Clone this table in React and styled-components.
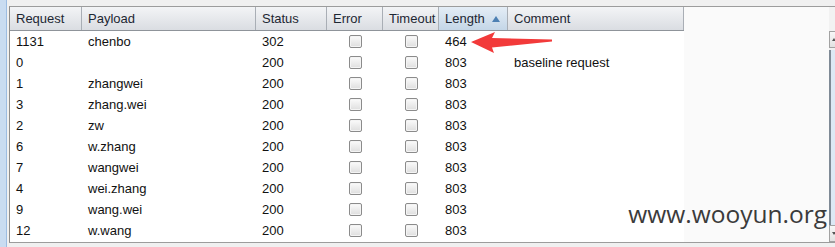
import styled, { createGlobalStyle } from 'styled-components';

const GlobalStyle = createGlobalStyle`
  html, body {
    margin: 0;
    padding: 0;
    background: #f0f0f0;
  }
  body {
    font-family: "Liberation Sans", Arial, sans-serif;
  }
`;

const COLUMNS = '72px 174px 71px 56px 56px 69px 176px';

const rows = [
  { id: '1131', payload: 'chenbo', status: '302', length: '464', comment: '' },
  { id: '0', payload: '', status: '200', length: '803', comment: 'baseline request' },
  { id: '1', payload: 'zhangwei', status: '200', length: '803', comment: '' },
  { id: '3', payload: 'zhang.wei', status: '200', length: '803', comment: '' },
  { id: '2', payload: 'zw', status: '200', length: '803', comment: '' },
  { id: '6', payload: 'w.zhang', status: '200', length: '803', comment: '' },
  { id: '7', payload: 'wangwei', status: '200', length: '803', comment: '' },
  { id: '4', payload: 'wei.zhang', status: '200', length: '803', comment: '' },
  { id: '9', payload: 'wang.wei', status: '200', length: '803', comment: '' },
  { id: '12', payload: 'w.wang', status: '200', length: '803', comment: '' },
];

const Page = styled.div`
  position: relative;
  display: flex;
  width: 835px;
  height: 247px;
  overflow: hidden;
  background: #f0f0f0;
`;

const SideStrip = styled.div`
  width: 6px;
  flex: none;
  background: #c9dcf1;
  border-right: 1px solid #9dbde2;
  margin-right: 2px;
`;

const Frame = styled.div`
  margin-top: 6px;
  height: 235px;
  display: flex;
  border-top: 1px solid #9c9c9c;
  border-bottom: 1px solid #9c9c9c;
  border-left: 1px solid #8d8d8d;
  flex: 1;
  min-width: 0;
`;

const Viewport = styled.div`
  width: 819px;
  flex: none;
  display: flex;
  background: #fafafa;
`;

const Table = styled.div`
  width: 674px;
  background: #fff;
  display: flex;
  flex-direction: column;
`;

const HeaderRow = styled.div`
  display: grid;
  grid-template-columns: ${COLUMNS};
  height: 23px;
  border-bottom: 1px solid #8f949a;
`;

const HeaderCell = styled.div`
  display: flex;
  align-items: center;
  justify-content: space-between;
  padding: 0 6px;
  font-size: 13px;
  color: #1d2733;
  border-right: 1px solid #a9aeb5;
  background: ${({ $sorted }) =>
    $sorted
      ? 'linear-gradient(#e4edf6, #c4d6e7)'
      : 'linear-gradient(#f3f4f6, #dadde2)'};
`;

const SortMark = styled.span`
  width: 0;
  height: 0;
  border-left: 4px solid transparent;
  border-right: 4px solid transparent;
  border-bottom: 6px solid #4d80b3;
  margin-right: 1px;
`;

const Row = styled.div`
  display: grid;
  grid-template-columns: ${COLUMNS};
  height: 21px;
`;

const Cell = styled.div`
  display: flex;
  align-items: center;
  justify-content: ${({ $center }) => ($center ? 'center' : 'flex-start')};
  padding: 0 6px;
  font-size: 13px;
  color: #111;
  white-space: nowrap;
`;

const CheckBox = styled.span`
  width: 11px;
  height: 11px;
  border: 1px solid #8b8b8b;
  border-radius: 2px;
  background: linear-gradient(#fbfbfb, #dedede);
  box-shadow: inset 0 0 0 1px #f4f4f4;
`;

const ScrollBar = styled.div`
  width: 7px;
  flex: none;
  display: flex;
  flex-direction: column;
  background: #f0f0f0;
`;

const ScrollCorner = styled.div`
  height: 24px;
  background: #f2f2f2;
`;

const ScrollButton = styled.div`
  height: 15px;
  border: 1px solid #a2a2a2;
  border-right: none;
  background: linear-gradient(#f7f7f7, #e2e2e2);
  display: flex;
  align-items: center;
  padding-left: 2px;
`;

const ScrollGlyph = styled.span`
  width: 0;
  height: 0;
  border-left: 2px solid transparent;
  border-right: 2px solid transparent;
  ${({ $down }) =>
    $down ? 'border-top: 3px solid #555;' : 'border-bottom: 3px solid #555;'}
`;

const ScrollThumb = styled.div`
  flex: 1;
  margin-top: 2px;
  border-left: 2px solid #7f8a96;
  background: #dce8f5;
`;

const Watermark = styled.div`
  position: absolute;
  right: 8px;
  top: 197px;
  font-family: "Open Sans", "DejaVu Sans", sans-serif;
  font-size: 24.5px;
  color: #3b3b3b;
`;

const Arrow = styled.svg`
  position: absolute;
  left: 0;
  top: 0;
  pointer-events: none;
`;

export default function App() {
  return (
    <>
      <GlobalStyle />
      <Page>
        <SideStrip />
        <Frame>
          <Viewport>
            <Table>
              <HeaderRow>
                <HeaderCell>Request</HeaderCell>
                <HeaderCell>Payload</HeaderCell>
                <HeaderCell>Status</HeaderCell>
                <HeaderCell>Error</HeaderCell>
                <HeaderCell>Timeout</HeaderCell>
                <HeaderCell $sorted>
                  Length <SortMark />
                </HeaderCell>
                <HeaderCell>Comment</HeaderCell>
              </HeaderRow>
              {rows.map((r) => (
                <Row key={r.id}>
                  <Cell>{r.id}</Cell>
                  <Cell>{r.payload}</Cell>
                  <Cell>{r.status}</Cell>
                  <Cell $center>
                    <CheckBox />
                  </Cell>
                  <Cell $center>
                    <CheckBox />
                  </Cell>
                  <Cell>{r.length}</Cell>
                  <Cell>{r.comment}</Cell>
                </Row>
              ))}
            </Table>
          </Viewport>
          <ScrollBar>
            <ScrollCorner />
            <ScrollButton>
              <ScrollGlyph />
            </ScrollButton>
            <ScrollThumb />
            <ScrollButton>
              <ScrollGlyph $down />
            </ScrollButton>
          </ScrollBar>
        </Frame>
        <Arrow width="835" height="247" viewBox="0 0 835 247">
          <polygon
            points="471,42 495,32 492,38 552,39.5 552,41.5 492,47.5 494,53"
            fill="#f23a3a"
          />
        </Arrow>
        <Watermark>www.wooyun.org</Watermark>
      </Page>
    </>
  );
}
